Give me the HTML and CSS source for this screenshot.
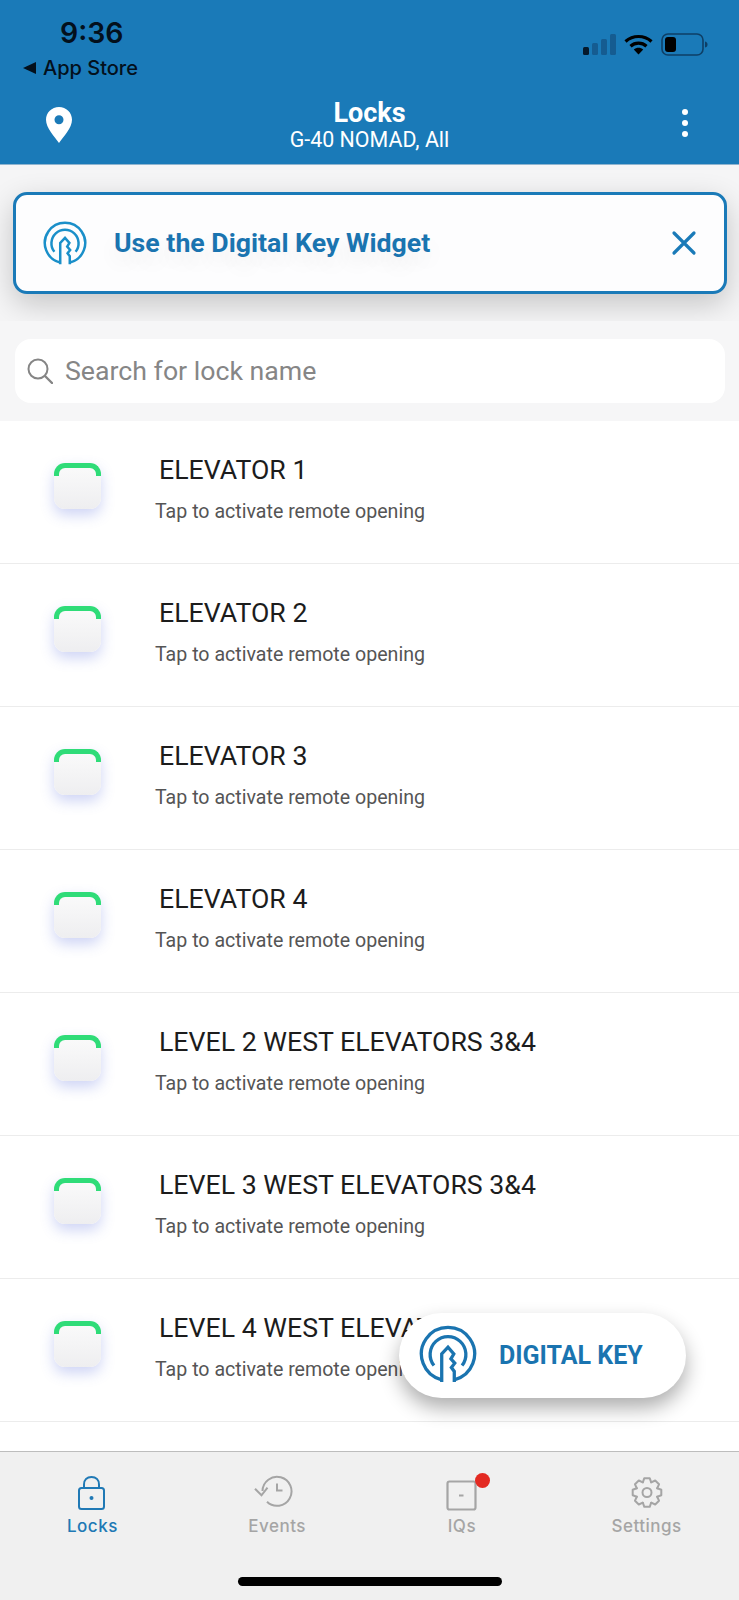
FILE: index.html
```html
<!DOCTYPE html>
<html lang="en">
<head>
    <meta charset="UTF-8">
    <meta name="viewport" content="width=device-width, initial-scale=1.0">
    <title>Locks</title>
    <link rel="stylesheet" href="styles.css">
</head>
<body>
    <svg class="defs" width="0" height="0">
        <symbol id="key-logo" viewBox="0 0 60 60">
            <path d="M23.500 56.700A27.500 27.500 0 1 1 36.500 56.700" fill="none" stroke="currentColor" stroke-width="3.400"/>
            <path d="M15.500 42A18.500 18.500 0 1 1 44.500 42" fill="none" stroke="currentColor" stroke-width="3.400"/>
            <path d="M23.500 59V30L30 23L36 30L33 35L37 39.500L33.500 44L36.500 48V59" fill="none" stroke="currentColor" stroke-width="3.400"/>
        </symbol>
    </svg>

    <div class="header">
        <div class="status-bar">
            <div class="status-left">
                <div class="time">9:36</div>
                <div class="back-app"><span class="back-arrow"></span>App Store</div>
            </div>
            <div class="status-icons">
                <svg width="33" height="21" viewBox="0 0 33 21">
                    <rect x="0" y="13" width="6" height="8" rx="1.500" fill="#05192b"/>
                    <rect x="9" y="9" width="6" height="12" rx="1.500" fill="#155c91"/>
                    <rect x="18" y="5" width="6" height="16" rx="1.500" fill="#155c91"/>
                    <rect x="27" y="0" width="6" height="21" rx="1.500" fill="#155c91"/>
                </svg>
                <svg width="29" height="21" viewBox="0 0 29 21">
                    <path d="M1.500 7.500C9 .8 20 .8 27.500 7.500" fill="none" stroke="#000" stroke-width="3.200"/>
                    <path d="M6.500 12.200C11 8.200 18 8.200 22.500 12.200" fill="none" stroke="#000" stroke-width="3.200"/>
                    <path d="M9.800 15.600C12.500 13.200 16.500 13.200 19.200 15.600L14.500 20.600Z" fill="#000"/>
                </svg>
                <svg width="47" height="23" viewBox="0 0 47 23">
                    <rect x="1" y="1" width="41" height="21" rx="6" fill="none" stroke="#0e3f66" stroke-width="1.600"/>
                    <rect x="4" y="4" width="11" height="15" rx="3" fill="#000"/>
                    <path d="M44 8.500C46 9 46.500 10 46.500 11.500C46.500 13 46 14 44 14.500Z" fill="#0e3f66"/>
                </svg>
            </div>
        </div>
        <div class="nav-bar">
            <svg class="pin" width="26" height="36" viewBox="0 0 26 36">
                <path d="M13 0C5.800 0 0 5.600 0 12.800C0 21 8.500 29.500 13 36C17.500 29.500 26 21 26 12.800C26 5.600 20.200 0 13 0Z M13 8.200A4.500 4.500 0 1 1 13 17.200A4.500 4.500 0 1 1 13 8.200Z" fill="#fff" fill-rule="evenodd"/>
            </svg>
            <div class="nav-title">
                <div class="nav-main">Locks</div>
                <div class="nav-sub">G-40 NOMAD, All</div>
            </div>
            <div class="more-dots"><span></span><span></span><span></span></div>
        </div>
    </div>

    <div class="banner-area">
        <div class="banner">
            <svg class="banner-logo"><use href="#key-logo"/></svg>
            <div class="banner-text">Use the Digital Key Widget</div>
            <svg class="banner-close" width="26" height="26" viewBox="0 0 26 26">
                <path d="M3 3L23 23M23 3L3 23" fill="none" stroke="#1a7ab8" stroke-width="3.200" stroke-linecap="round"/>
            </svg>
        </div>
    </div>

    <div class="search-area">
        <div class="search-box">
            <svg width="26" height="26" viewBox="0 0 26 26">
                <circle cx="11" cy="11" r="9.500" fill="none" stroke="#858585" stroke-width="2"/>
                <path d="M18 18L25 25" fill="none" stroke="#858585" stroke-width="2.400" stroke-linecap="round"/>
            </svg>
            <span>Search for lock name</span>
        </div>
    </div>

    <div class="lock-list">
        <div class="lock-row">
            <div class="lock-tile"></div>
            <div class="lock-info">
                <div class="lock-name">ELEVATOR 1</div>
                <div class="lock-hint">Tap to activate remote opening</div>
            </div>
        </div>
        <div class="lock-row">
            <div class="lock-tile"></div>
            <div class="lock-info">
                <div class="lock-name">ELEVATOR 2</div>
                <div class="lock-hint">Tap to activate remote opening</div>
            </div>
        </div>
        <div class="lock-row">
            <div class="lock-tile"></div>
            <div class="lock-info">
                <div class="lock-name">ELEVATOR 3</div>
                <div class="lock-hint">Tap to activate remote opening</div>
            </div>
        </div>
        <div class="lock-row">
            <div class="lock-tile"></div>
            <div class="lock-info">
                <div class="lock-name">ELEVATOR 4</div>
                <div class="lock-hint">Tap to activate remote opening</div>
            </div>
        </div>
        <div class="lock-row">
            <div class="lock-tile"></div>
            <div class="lock-info">
                <div class="lock-name">LEVEL 2 WEST ELEVATORS 3&amp;4</div>
                <div class="lock-hint">Tap to activate remote opening</div>
            </div>
        </div>
        <div class="lock-row">
            <div class="lock-tile"></div>
            <div class="lock-info">
                <div class="lock-name">LEVEL 3 WEST ELEVATORS 3&amp;4</div>
                <div class="lock-hint">Tap to activate remote opening</div>
            </div>
        </div>
        <div class="lock-row">
            <div class="lock-tile"></div>
            <div class="lock-info">
                <div class="lock-name">LEVEL 4 WEST ELEVATORS 3&amp;4</div>
                <div class="lock-hint">Tap to activate remote opening</div>
            </div>
        </div>
    </div>

    <div class="digital-key">
        <svg class="digital-key-logo"><use href="#key-logo"/></svg>
        <span>DIGITAL KEY</span>
    </div>

    <div class="tab-bar">
        <div class="tab active">
            <svg width="30" height="36" viewBox="0 0 30 36">
                <rect x="2" y="13" width="25" height="21" rx="2.500" fill="none" stroke="currentColor" stroke-width="2"/>
                <path d="M7 13V9.500C7 4.800 10 2 14.500 2C19 2 22 4.800 22 9.500V13" fill="none" stroke="currentColor" stroke-width="2"/>
                <circle cx="14.500" cy="23" r="2" fill="currentColor"/>
            </svg>
            <div class="tab-label">Locks</div>
        </div>
        <div class="tab">
            <svg width="46" height="36" viewBox="0 0 46 36">
                <path d="M8.500 16A14.500 14.500 0 1 1 13 26.800" fill="none" stroke="currentColor" stroke-width="2"/>
                <path d="M1 13.700L7.500 20.300L13.500 12.700" fill="none" stroke="currentColor" stroke-width="2"/>
                <path d="M23 8.500V15.500H28.500" fill="none" stroke="currentColor" stroke-width="2"/>
            </svg>
            <div class="tab-label">Events</div>
        </div>
        <div class="tab">
            <div class="iq-icon">
                <svg width="31" height="31" viewBox="0 0 31 31">
                    <rect x="1.500" y="1.500" width="28" height="28" rx="2" fill="none" stroke="currentColor" stroke-width="2.200"/>
                    <path d="M13 15.500H17.500" fill="none" stroke="currentColor" stroke-width="2"/>
                </svg>
                <span class="badge"></span>
            </div>
            <div class="tab-label">IQs</div>
        </div>
        <div class="tab">
            <svg width="32" height="36" viewBox="0 0 32 36">
                <g transform="translate(16 17.500)" fill="none" stroke="currentColor" stroke-width="2" stroke-linejoin="round" stroke-linecap="round">
                    <path id="gear-tooth" d="M-4.200 -10.200L-2.700 -14.300H2.700L4.200 -10.200"/>
                    <use href="#gear-tooth" transform="rotate(45)"/>
                    <use href="#gear-tooth" transform="rotate(90)"/>
                    <use href="#gear-tooth" transform="rotate(135)"/>
                    <use href="#gear-tooth" transform="rotate(180)"/>
                    <use href="#gear-tooth" transform="rotate(225)"/>
                    <use href="#gear-tooth" transform="rotate(270)"/>
                    <use href="#gear-tooth" transform="rotate(315)"/>
                    <circle r="4.500"/>
                </g>
            </svg>
            <div class="tab-label">Settings</div>
        </div>
        <div class="home-indicator"></div>
    </div>
</body>
</html>
```

FILE: styles.css
```css
body {
    font-family: Roboto, Arial, sans-serif;
    background-color: white;
    margin: 0;
    padding: 0;
    width: 739px;
    height: 1600px;
    overflow: hidden;
    position: relative;
    display: flex;
    flex-direction: column;
}
.defs {
    position: absolute;
}
.header {
    height: 165px;
    box-sizing: border-box;
    background-color: #1a7ab8;
    color: white;
    border-bottom: 1px solid #8fb4cf;
    flex-shrink: 0;
}
.status-bar {
    height: 92px;
    display: flex;
    justify-content: space-between;
    align-items: flex-start;
    padding: 0 31px 0 23px;
}
.status-left {
    font-family: Inter, sans-serif;
    color: #03101c;
}
.time {
    font-size: 28.400px;
    font-weight: 600;
    line-height: 32px;
    margin: 17px 0 0 37px;
}
.back-app {
    display: flex;
    align-items: center;
    font-size: 20px;
    font-weight: 500;
    line-height: 24px;
    margin-top: 7px;
}
.back-arrow {
    width: 0;
    height: 0;
    border-top: 6px solid transparent;
    border-bottom: 6px solid transparent;
    border-right: 13px solid #03101c;
    margin-right: 7px;
}
.status-icons {
    display: flex;
    align-items: center;
    gap: 8px;
    margin-top: 33px;
}
.nav-bar {
    display: flex;
    align-items: flex-start;
    padding: 15px 51px 0 46px;
}
.nav-title {
    flex: 1;
    text-align: center;
    margin: -9px 15px 0 0;
}
.nav-main {
    font-size: 27px;
    font-weight: 700;
    line-height: 30px;
}
.nav-sub {
    font-size: 21.400px;
    line-height: 24px;
}
.more-dots {
    display: flex;
    flex-direction: column;
    gap: 5px;
    margin-top: 2px;
}
.more-dots span {
    width: 6px;
    height: 6px;
    border-radius: 50%;
    background-color: white;
}
.banner-area {
    height: 156px;
    box-sizing: border-box;
    padding: 27px 12px 0 13px;
    background-color: #f5f5f6;
    flex-shrink: 0;
}
.banner {
    height: 102px;
    box-sizing: border-box;
    border: 3px solid #1a7ab8;
    border-radius: 14px;
    background-color: #fdfdfe;
    box-shadow: 0 10px 30px rgba(0, 0, 0, 0.2);
    display: flex;
    align-items: center;
    padding: 0 27px 0 27px;
}
.banner-logo {
    width: 44px;
    height: 44px;
    color: #1a8fc9;
    flex-shrink: 0;
}
.banner-text {
    flex: 1;
    margin-left: 27px;
    font-size: 26.700px;
    font-weight: 700;
    color: #1a74b0;
    text-shadow: 0 10px 20px rgba(0, 0, 0, 0.08);
}
.search-area {
    height: 100px;
    box-sizing: border-box;
    padding: 18px 14px 18px 15px;
    background-color: #f6f6f7;
    flex-shrink: 0;
}
.search-box {
    height: 64px;
    box-sizing: border-box;
    background-color: white;
    border-radius: 16px;
    display: flex;
    align-items: center;
    gap: 12px;
    padding: 0 12px;
    color: #868686;
    font-size: 26.700px;
}
.lock-list {
    flex: 1;
    background-color: white;
}
.lock-row {
    height: 143px;
    box-sizing: border-box;
    border-bottom: 1px solid #ececec;
    display: flex;
    align-items: flex-start;
    padding: 42px 0 0 54px;
}
.lock-tile {
    width: 47px;
    height: 46px;
    border-radius: 11px;
    background: linear-gradient(#fbfbfb, #eeeef0);
    box-shadow: 0 6px 14px rgba(80, 100, 220, 0.28);
}
.lock-tile::before {
    content: "";
    display: block;
    height: 8px;
    border: 5px solid #2fdc78;
    border-bottom: none;
    border-radius: 11px 11px 0 0;
}
.lock-info {
    margin-left: 54px;
}
.lock-name {
    margin: -9px 0 0 4px;
    font-size: 26.700px;
    line-height: 32px;
    color: #1c1c1c;
}
.lock-hint {
    margin-top: 14px;
    font-size: 19.600px;
    line-height: 24px;
    color: #555;
}
.digital-key {
    position: absolute;
    left: 399px;
    top: 1313px;
    width: 287px;
    height: 85px;
    box-sizing: border-box;
    border-radius: 43px;
    background-color: white;
    box-shadow: 0 10px 20px rgba(0, 0, 0, 0.32);
    display: flex;
    align-items: center;
    padding-left: 20px;
    color: #1a74b0;
    font-size: 25px;
    font-weight: 700;
}
.digital-key-logo {
    width: 58px;
    height: 58px;
    margin: 0 22px 3px 0;
}
.tab-bar {
    height: 149px;
    box-sizing: border-box;
    background-color: #f0f0f0;
    border-top: 1px solid #bdbdbd;
    display: grid;
    grid-template-columns: repeat(4, 1fr);
    align-items: start;
    position: relative;
    flex-shrink: 0;
    font-family: Inter, sans-serif;
}
.tab {
    display: flex;
    flex-direction: column;
    align-items: center;
    padding-top: 23px;
    color: #a5a5a5;
}
.tab.active {
    color: #2079b5;
}
.tab svg {
    display: block;
    height: 36px;
}
.tab-label {
    font-size: 17px;
    font-weight: 500;
    line-height: 22px;
    margin-top: 4px;
    letter-spacing: 0.5px;
}
.iq-icon {
    position: relative;
    height: 36px;
    display: flex;
    align-items: flex-end;
}
.iq-icon svg {
    height: 31px;
}
.badge {
    position: absolute;
    top: -2px;
    right: -13px;
    width: 15px;
    height: 15px;
    border-radius: 50%;
    background-color: #e32a22;
}
.home-indicator {
    position: absolute;
    left: 238px;
    bottom: 14px;
    width: 264px;
    height: 9px;
    border-radius: 5px;
    background-color: black;
}
```
